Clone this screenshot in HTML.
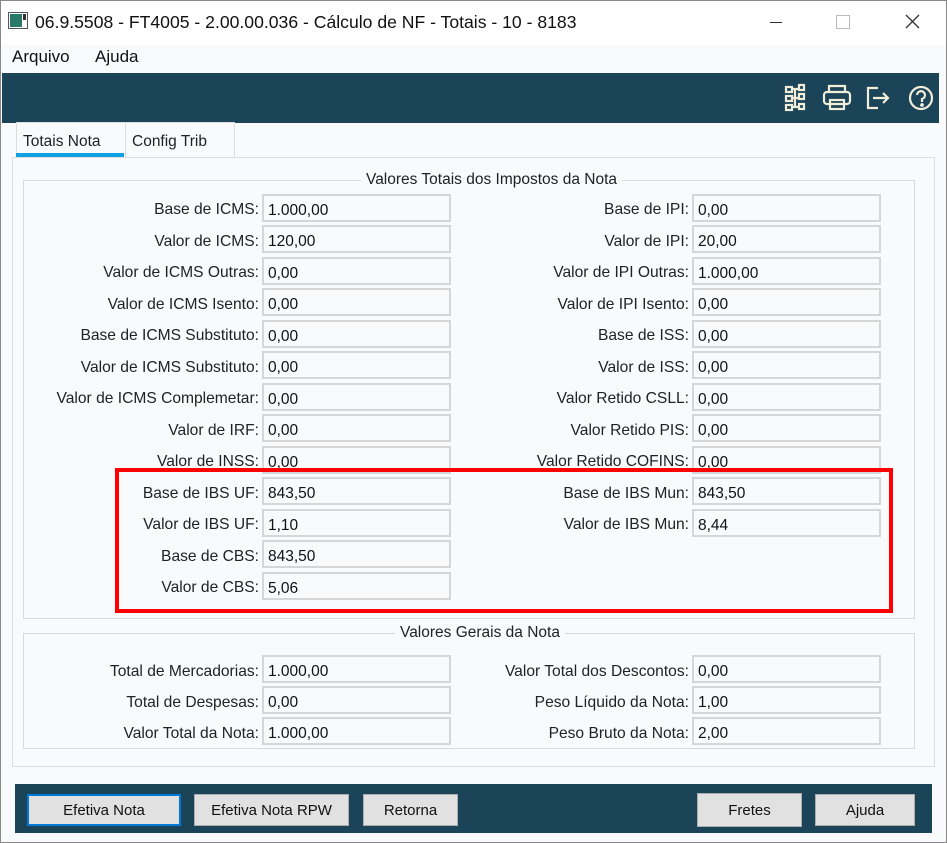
<!DOCTYPE html>
<html><head><meta charset="utf-8"><style>
body{margin:0;width:947px;height:843px;background:#f0f0f0;font-family:"Liberation Sans",sans-serif;position:relative;overflow:hidden}
.a{position:absolute}
.win{left:0;top:0;width:945px;height:841px;border:1px solid #888;background:#f9fafb}
.title{left:1px;top:1px;width:945px;height:44px;background:#fff}
.lbl{position:absolute;font-size:15.6px;color:#222;text-align:right;white-space:nowrap}
.inp{position:absolute;height:28px;border:1px solid #d6d6d6;background:#f9fafb;font-size:15.5px;color:#111;line-height:30px;padding-left:4px;box-sizing:border-box;border-width:2px}
.btn{position:absolute;top:794px;height:32px;background:#e1e1e1;border:1px solid #adadad;box-sizing:border-box;font-size:15px;text-align:center;line-height:30px;color:#111}
.grp{position:absolute;border:1px solid #d9d9d9}
.gt{position:absolute;background:#f9fafb;font-size:15.5px;color:#222;padding:0 5px}
</style></head><body>
<div class="a win"></div>
<div class="a title"></div>
<svg class="a" style="left:8px;top:12px" width="20" height="18"><rect x="0.5" y="0.5" width="19" height="16" fill="#fff" stroke="#555"/><rect x="2" y="2" width="12" height="13" fill="#2a7a6a"/><rect x="15" y="2" width="3" height="6" fill="#333"/></svg>
<div class="a" style="left:35px;top:12px;font-size:17.6px;color:#111">06.9.5508 - FT4005 - 2.00.00.036 - Cálculo de NF - Totais - 10 - 8183</div>
<div class="a" style="left:770px;top:22px;width:12px;height:1px;background:#333"></div>
<div class="a" style="left:836px;top:15px;width:12px;height:12px;border:1px solid #bbb"></div>
<svg class="a" style="left:905px;top:14px" width="15" height="15"><path d="M1 1L14 14M14 1L1 14" stroke="#333" stroke-width="1.3"/></svg>
<div class="a" style="left:12px;top:47px;font-size:17px;color:#111">Arquivo</div>
<div class="a" style="left:95px;top:47px;font-size:17px;color:#111">Ajuda</div>
<div class="a" style="left:2px;top:73px;width:937px;height:50px;background:#1b4459"></div>
<svg class="a" style="left:780px;top:80px" width="160" height="34" fill="none" stroke="#f1edd8" stroke-width="2.2">
<rect x="6" y="7" width="6" height="5"/><rect x="6" y="16" width="6" height="5"/><rect x="6" y="25" width="6" height="5"/><rect x="19" y="5" width="5" height="5"/><rect x="19" y="14" width="5" height="5"/><rect x="19" y="24" width="5" height="5"/><path d="M12 9H19M12 18H19M12 27H19M15 9V27"/>
<path d="M49 12V6H65V12"/><rect x="44" y="12" width="26" height="12" rx="3"/><rect x="50" y="20" width="14" height="9"/>
<path d="M98 8H88V28H98M93 18H108M103 13L108 18L103 23"/>
<circle cx="141" cy="18" r="11"/><path d="M137 15a4 4 0 1 1 5 4v3" /><circle cx="142" cy="25" r="0.8" fill="#f1edd8"/>
</svg>
<div class="a" style="left:16px;top:122px;width:108px;height:34px;background:#f9fafb;border:1px solid #ddd;border-bottom:none"></div>
<div class="a" style="left:125px;top:122px;width:108px;height:34px;background:#f9fafb;border:1px solid #ddd;border-bottom:none"></div>
<div class="a" style="left:23px;top:133px;font-size:15.5px;color:#222">Totais Nota</div>
<div class="a" style="left:132px;top:133px;font-size:15.5px;color:#222">Config Trib</div>
<div class="a" style="left:16px;top:153px;width:108px;height:4px;background:#0ea0e0"></div>
<div class="a" style="left:12px;top:157px;width:921px;height:608px;border:1px solid #ddd;background:#f9fafb"></div>
<div class="grp" style="left:23px;top:180px;width:890px;height:437px"></div>
<div class="gt" style="left:361px;top:171px">Valores Totais dos Impostos da Nota</div>
<div class="grp" style="left:23px;top:633px;width:890px;height:114px"></div>
<div class="gt" style="left:395px;top:624px">Valores Gerais da Nota</div>

<div class="lbl" style="right:688px;top:201px">Base de ICMS:</div><div class="inp" style="left:262px;top:194px;width:189px">1.000,00</div>
<div class="lbl" style="right:688px;top:233px">Valor de ICMS:</div><div class="inp" style="left:262px;top:225px;width:189px">120,00</div>
<div class="lbl" style="right:688px;top:264px">Valor de ICMS Outras:</div><div class="inp" style="left:262px;top:257px;width:189px">0,00</div>
<div class="lbl" style="right:688px;top:296px">Valor de ICMS Isento:</div><div class="inp" style="left:262px;top:288px;width:189px">0,00</div>
<div class="lbl" style="right:688px;top:327px">Base de ICMS Substituto:</div><div class="inp" style="left:262px;top:320px;width:189px">0,00</div>
<div class="lbl" style="right:688px;top:359px">Valor de ICMS Substituto:</div><div class="inp" style="left:262px;top:351px;width:189px">0,00</div>
<div class="lbl" style="right:688px;top:390px">Valor de ICMS Complemetar:</div><div class="inp" style="left:262px;top:383px;width:189px">0,00</div>
<div class="lbl" style="right:688px;top:422px">Valor de IRF:</div><div class="inp" style="left:262px;top:414px;width:189px">0,00</div>
<div class="lbl" style="right:688px;top:453px">Valor de INSS:</div><div class="inp" style="left:262px;top:446px;width:189px">0,00</div>
<div class="lbl" style="right:688px;top:485px">Base de IBS UF:</div><div class="inp" style="left:262px;top:477px;width:189px">843,50</div>
<div class="lbl" style="right:688px;top:516px">Valor de IBS UF:</div><div class="inp" style="left:262px;top:509px;width:189px">1,10</div>
<div class="lbl" style="right:688px;top:548px">Base de CBS:</div><div class="inp" style="left:262px;top:540px;width:189px">843,50</div>
<div class="lbl" style="right:688px;top:579px">Valor de CBS:</div><div class="inp" style="left:262px;top:572px;width:189px">5,06</div>

<div class="lbl" style="right:258px;top:201px">Base de IPI:</div><div class="inp" style="left:692px;top:194px;width:189px">0,00</div>
<div class="lbl" style="right:258px;top:233px">Valor de IPI:</div><div class="inp" style="left:692px;top:225px;width:189px">20,00</div>
<div class="lbl" style="right:258px;top:264px">Valor de IPI Outras:</div><div class="inp" style="left:692px;top:257px;width:189px">1.000,00</div>
<div class="lbl" style="right:258px;top:296px">Valor de IPI Isento:</div><div class="inp" style="left:692px;top:288px;width:189px">0,00</div>
<div class="lbl" style="right:258px;top:327px">Base de ISS:</div><div class="inp" style="left:692px;top:320px;width:189px">0,00</div>
<div class="lbl" style="right:258px;top:359px">Valor de ISS:</div><div class="inp" style="left:692px;top:351px;width:189px">0,00</div>
<div class="lbl" style="right:258px;top:390px">Valor Retido CSLL:</div><div class="inp" style="left:692px;top:383px;width:189px">0,00</div>
<div class="lbl" style="right:258px;top:422px">Valor Retido PIS:</div><div class="inp" style="left:692px;top:414px;width:189px">0,00</div>
<div class="lbl" style="right:258px;top:453px">Valor Retido COFINS:</div><div class="inp" style="left:692px;top:446px;width:189px">0,00</div>
<div class="lbl" style="right:258px;top:485px">Base de IBS Mun:</div><div class="inp" style="left:692px;top:477px;width:189px">843,50</div>
<div class="lbl" style="right:258px;top:516px">Valor de IBS Mun:</div><div class="inp" style="left:692px;top:509px;width:189px">8,44</div>

<div class="a" style="left:115px;top:468px;width:770px;height:137px;border:4px solid #f00"></div>

<div class="lbl" style="right:688px;top:663px">Total de Mercadorias:</div><div class="inp" style="left:262px;top:655px;width:189px">1.000,00</div>
<div class="lbl" style="right:688px;top:694px">Total de Despesas:</div><div class="inp" style="left:262px;top:686px;width:189px">0,00</div>
<div class="lbl" style="right:688px;top:725px">Valor Total da Nota:</div><div class="inp" style="left:262px;top:717px;width:189px">1.000,00</div>
<div class="lbl" style="right:258px;top:663px">Valor Total dos Descontos:</div><div class="inp" style="left:692px;top:655px;width:189px">0,00</div>
<div class="lbl" style="right:258px;top:694px">Peso Líquido da Nota:</div><div class="inp" style="left:692px;top:686px;width:189px">1,00</div>
<div class="lbl" style="right:258px;top:725px">Peso Bruto da Nota:</div><div class="inp" style="left:692px;top:717px;width:189px">2,00</div>

<div class="a" style="left:15px;top:784px;width:917px;height:49px;background:#1b4459"></div>
<div class="btn" style="left:27px;width:154px;border:2px solid #0078d7;line-height:30px">Efetiva Nota</div>
<div class="btn" style="left:194px;width:155px;line-height:32px">Efetiva Nota RPW</div>
<div class="btn" style="left:363px;width:95px;line-height:32px">Retorna</div>
<div class="btn" style="left:697px;width:105px;top:793px;height:34px;line-height:34px">Fretes</div>
<div class="btn" style="left:815px;width:100px;line-height:32px">Ajuda</div>
</body></html>
